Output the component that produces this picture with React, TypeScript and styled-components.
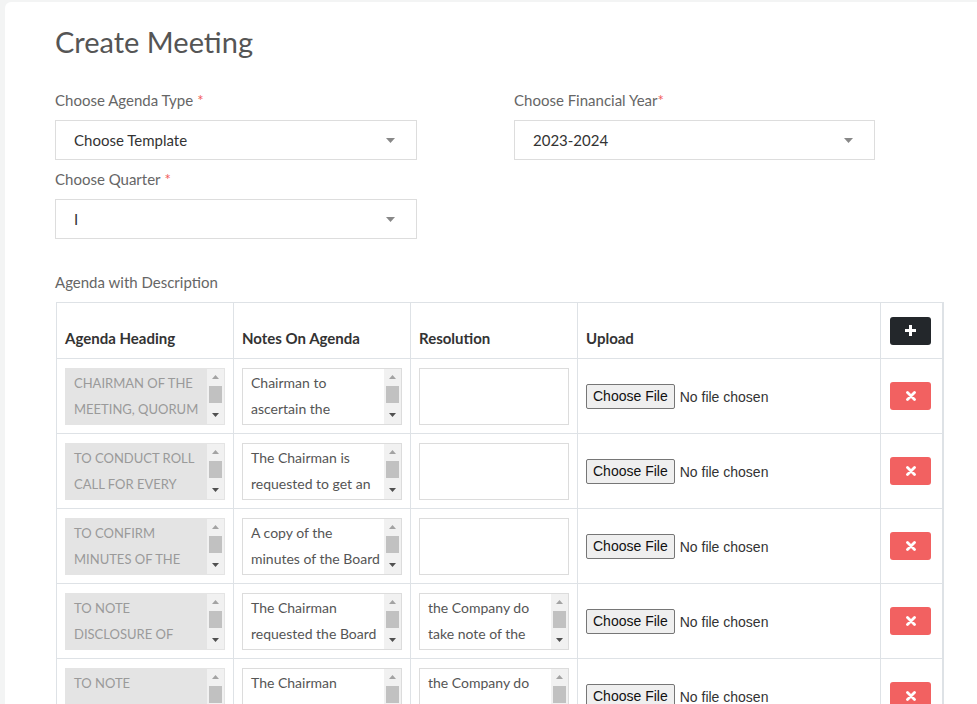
import * as React from "react";
import styled, { createGlobalStyle } from "styled-components";

type AgendaRow = {
  heading: string;
  notes: string;
  resolution: string;
};

const rows: AgendaRow[] = [
  {
    heading: "CHAIRMAN OF THE MEETING, QUORUM AND LEAVE OF ABSENCE",
    notes:
      "Chairman to ascertain the presence of requisite quorum and grant leave of absence to the directors who could not attend.",
    resolution: "",
  },
  {
    heading: "TO CONDUCT ROLL CALL FOR EVERY DIRECTOR PRESENT",
    notes:
      "The Chairman is requested to get an attendance roll call done for every director attending the meeting.",
    resolution: "",
  },
  {
    heading: "TO CONFIRM MINUTES OF THE PREVIOUS BOARD MEETING",
    notes:
      "A copy of the minutes of the Board Meeting held last quarter was circulated to all the directors.",
    resolution: "",
  },
  {
    heading: "TO NOTE DISCLOSURE OF INTEREST BY DIRECTORS",
    notes:
      "The Chairman requested the Board to take note of the disclosure of interest received from the directors.",
    resolution:
      "the Company do take note of the disclosure of interest received from the directors.",
  },
  {
    heading: "TO NOTE DECLARATIONS RECEIVED FROM INDEPENDENT DIRECTORS",
    notes:
      "The Chairman informed the Board about the declarations received from the independent directors.",
    resolution:
      "the Company do take note of the declarations received from independent directors.",
  },
];

const GlobalStyle = createGlobalStyle`
  html, body {
    margin: 0;
    padding: 0;
    background: #f3f4f4;
    overflow: hidden;
  }
  body {
    font-family: Lato, "Open Sans", sans-serif;
  }
`;

const Card = styled.div`
  margin: 2px 0 0 5px;
  min-height: 702px;
  box-sizing: border-box;
  padding: 23px 0 0 50px;
  background: #fff;
  border-radius: 6px 0 0 0;
`;

const Title = styled.h2`
  margin: 0 0 30px;
  font-size: 29px;
  line-height: 34px;
  font-weight: 400;
  color: #555;
`;

const FieldGrid = styled.div`
  display: grid;
  grid-template-columns: 362px 361px;
  column-gap: 97px;
  row-gap: 8px;
`;

const Field = styled.div`
  display: flex;
  flex-direction: column;
  gap: 9px;
`;

const Label = styled.label`
  font-size: 15px;
  line-height: 22px;
  color: #666;
`;

const Star = styled.span<{ $tight?: boolean }>`
  color: #f25a5a;
  margin-left: ${(p) => (p.$tight ? "0" : "4px")};
`;

const SelectBox = styled.div`
  display: flex;
  align-items: center;
  height: 40px;
  box-sizing: border-box;
  padding: 0 21px 0 18px;
  border: 1px solid #ddd;
  background: #fff;
`;

const NativeSelect = styled.select`
  flex: 1;
  appearance: none;
  border: 0;
  outline: none;
  background: transparent;
  padding: 0;
  font-family: Lato, "Open Sans", sans-serif;
  font-size: 15px;
  color: #333;
`;

const SectionLabel = styled.div`
  margin: 32px 0 9px;
  font-size: 15px;
  line-height: 22px;
  color: #666;
`;

const Table = styled.table`
  width: 886px;
  margin-left: 1px;
  table-layout: fixed;
  border-collapse: collapse;
  border: 1px solid #dee2e6;
  border-right-width: 2px;
`;

const HeadCell = styled.th<{ $middle?: boolean }>`
  height: 56px;
  box-sizing: border-box;
  padding: ${(p) => (p.$middle ? "0 8px" : "0 8px 9px")};
  border: 1px solid #dee2e6;
  text-align: left;
  vertical-align: ${(p) => (p.$middle ? "middle" : "bottom")};
  font-size: 15px;
  line-height: 22px;
  font-weight: 700;
  color: #333;
`;

const Cell = styled.td`
  height: 75px;
  box-sizing: border-box;
  padding: 0 8px;
  border: 1px solid #dee2e6;
  vertical-align: middle;
`;

const NoteFrame = styled.div<{ $locked?: boolean }>`
  display: flex;
  height: 57px;
  box-sizing: border-box;
  border: 1px solid ${(p) => (p.$locked ? "#e4e4e4" : "#dcdcdc")};
  background: ${(p) => (p.$locked ? "#e4e4e4" : "#fff")};
`;

const NoteText = styled.textarea<{ $locked?: boolean }>`
  flex: 1;
  min-width: 0;
  margin: 0;
  padding: 1px 2px 1px 8px;
  resize: none;
  overflow: hidden;
  border: 0;
  background: transparent;
  color: ${(p) => (p.$locked ? "#9a9a9a" : "#555")};
  font-family: Lato, "Open Sans", sans-serif;
  font-size: ${(p) => (p.$locked ? "13px" : "14px")};
  line-height: 26px;
  outline: none;
`;

const Rail = styled.div`
  display: flex;
  flex-direction: column;
  width: 17px;
  flex: none;
  background: #f1f1f1;
`;

const RailArrow = styled.div`
  display: flex;
  align-items: center;
  justify-content: center;
  height: 17px;
  flex: none;
`;

const RailThumb = styled.div`
  height: 17px;
  margin: 0 2px;
  background: #c1c1c1;
`;

const RailGap = styled.div`
  flex: 1;
`;

const FileInput = styled.input.attrs({ type: "file" })`
  font-family: "Liberation Sans", Arial, sans-serif;
  font-size: 14px;
  color: #333;

  &::file-selector-button {
    height: 25px;
    margin-right: 5px;
    padding: 0 6px;
    font: inherit;
    color: #111;
    background: #efefef;
    border: 1px solid #767676;
    border-radius: 2px;
  }
`;

const IconButton = styled.button<{ $tone: "dark" | "danger" }>`
  display: flex;
  align-items: center;
  justify-content: center;
  width: 41px;
  height: 28px;
  margin-left: 1px;
  padding: 0;
  border: 0;
  border-radius: 3px;
  background: ${(p) => (p.$tone === "dark" ? "#23272b" : "#f26161")};
  cursor: pointer;
`;

const Caret = () => (
  <svg width="9" height="5" viewBox="0 0 9 5">
    <path d="M0 0h9L4.5 5z" fill="#888" />
  </svg>
);

const RailTriangle = ({ up, color }: { up?: boolean; color: string }) => (
  <svg width="7" height="4" viewBox="0 0 7 4">
    <path d={up ? "M0 4h7L3.5 0z" : "M0 0h7L3.5 4z"} fill={color} />
  </svg>
);

const PlusIcon = () => (
  <svg width="11" height="11" viewBox="0 0 11 11">
    <path d="M4 0h3v4h4v3H7v4H4V7H0V4h4z" fill="#fff" />
  </svg>
);

const CrossIcon = () => (
  <svg width="10" height="10" viewBox="0 0 10 10">
    <path
      d="M1.5 1.5l7 7M8.5 1.5l-7 7"
      stroke="#fff"
      strokeWidth="2.8"
      strokeLinecap="round"
    />
  </svg>
);

function Dropdown({ value }: { value: string }) {
  return (
    <SelectBox>
      <NativeSelect defaultValue={value}>
        <option>{value}</option>
      </NativeSelect>
      <Caret />
    </SelectBox>
  );
}

function Note({ text, locked }: { text: string; locked?: boolean }) {
  return (
    <NoteFrame $locked={locked}>
      <NoteText $locked={locked} readOnly={locked} defaultValue={text} />
      {text && (
        <Rail>
          <RailArrow>
            <RailTriangle up color="#a3a3a3" />
          </RailArrow>
          <RailThumb />
          <RailGap />
          <RailArrow>
            <RailTriangle color="#505050" />
          </RailArrow>
        </Rail>
      )}
    </NoteFrame>
  );
}

export default function App() {
  return (
    <Card>
      <GlobalStyle />
      <Title>Create Meeting</Title>

      <FieldGrid>
        <Field>
          <Label>
            Choose Agenda Type<Star>*</Star>
          </Label>
          <Dropdown value="Choose Template" />
        </Field>
        <Field>
          <Label>
            Choose Financial Year<Star $tight>*</Star>
          </Label>
          <Dropdown value="2023-2024" />
        </Field>
        <Field>
          <Label>
            Choose Quarter<Star>*</Star>
          </Label>
          <Dropdown value="I" />
        </Field>
      </FieldGrid>

      <SectionLabel>Agenda with Description</SectionLabel>

      <Table>
        <colgroup>
          <col style={{ width: 177 }} />
          <col style={{ width: 177 }} />
          <col style={{ width: 167 }} />
          <col style={{ width: 303 }} />
          <col style={{ width: 62 }} />
        </colgroup>
        <thead>
          <tr>
            <HeadCell>Agenda Heading</HeadCell>
            <HeadCell>Notes On Agenda</HeadCell>
            <HeadCell>Resolution</HeadCell>
            <HeadCell>Upload</HeadCell>
            <HeadCell $middle>
              <IconButton $tone="dark" aria-label="Add agenda">
                <PlusIcon />
              </IconButton>
            </HeadCell>
          </tr>
        </thead>
        <tbody>
          {rows.map((row, i) => (
            <tr key={i}>
              <Cell>
                <Note locked text={row.heading} />
              </Cell>
              <Cell>
                <Note text={row.notes} />
              </Cell>
              <Cell>
                <Note text={row.resolution} />
              </Cell>
              <Cell>
                <FileInput />
              </Cell>
              <Cell>
                <IconButton $tone="danger" aria-label="Remove agenda">
                  <CrossIcon />
                </IconButton>
              </Cell>
            </tr>
          ))}
        </tbody>
      </Table>
    </Card>
  );
}
